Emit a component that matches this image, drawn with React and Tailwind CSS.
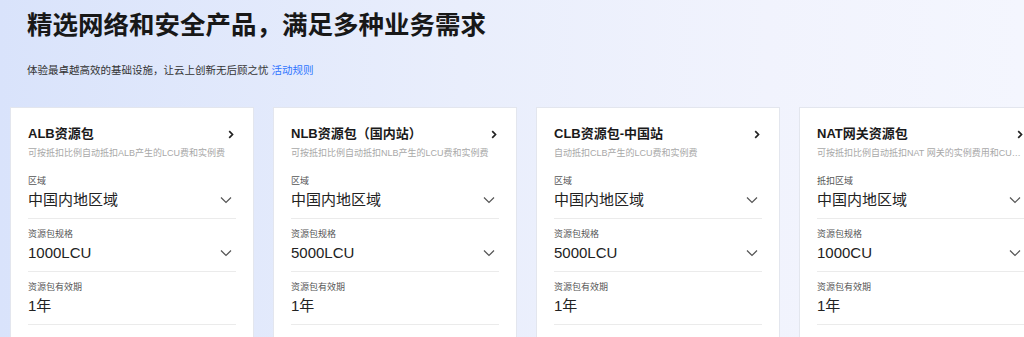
const cards = [
  {
    title: "ALB资源包",
    desc: "可按抵扣比例自动抵扣ALB产生的LCU费和实例费",
    regionLabel: "区域",
    spec: "1000LCU",
  },
  {
    title: "NLB资源包（国内站）",
    desc: "可按抵扣比例自动抵扣NLB产生的LCU费和实例费",
    regionLabel: "区域",
    spec: "5000LCU",
  },
  {
    title: "CLB资源包-中国站",
    desc: "自动抵扣CLB产生的LCU费和实例费",
    regionLabel: "区域",
    spec: "5000LCU",
  },
  {
    title: "NAT网关资源包",
    desc: "可按抵扣比例自动抵扣NAT 网关的实例费用和CU费用",
    regionLabel: "抵扣区域",
    spec: "1000CU",
  },
];

function ChevronDown() {
  return (
    <svg width="12" height="8" viewBox="0 0 12 8" fill="none" className="mr-[4px]">
      <path d="M1 1.5L6 6.5L11 1.5" stroke="#555" strokeWidth="1.2" />
    </svg>
  );
}

function ChevronRight() {
  return (
    <svg width="6" height="9" viewBox="0 0 6 9" fill="none" className="mr-[2px]">
      <path d="M1.2 1.2L4.5 4.5L1.2 7.8" stroke="#222" strokeWidth="1.7" />
    </svg>
  );
}

function Field({ label, value, select }) {
  return (
    <div className="pt-[8px] pb-[7px] border-b border-[#ebebeb]">
      <div className="text-[9px] leading-[14px] text-[#555]">{label}</div>
      <div className="mt-[1px] flex items-center justify-between h-[22px]">
        <span className="text-[15px] leading-[22px] text-[#222]">{value}</span>
        {select && <ChevronDown />}
      </div>
    </div>
  );
}

function Card({ card }) {
  return (
    <div className="w-[244px] shrink-0 bg-white border border-[#e3e6ee] px-[17px] pt-[17px] h-[260px]">
      <div className="flex items-center justify-between h-[18px]">
        <span className="text-[13px] font-bold text-[#1a1a1a]">{card.title}</span>
        <ChevronRight />
      </div>
      <div className="mt-[3px] text-[9px] leading-[14px] text-[#a8a8a8] truncate">
        {card.desc}
      </div>
      <div className="mt-[6px]">
        <Field label={card.regionLabel} value="中国内地区域" select />
        <Field label="资源包规格" value={card.spec} select />
        <Field label="资源包有效期" value="1年" />
      </div>
    </div>
  );
}

export default function App() {
  return (
    <div
      className="w-[1024px] h-[337px] overflow-hidden bg-[linear-gradient(90deg,#d9e3fb_0%,#e9eefc_45%,#f1f3fd_75%,#f4f6fe_100%)]"
      style={{ fontFamily: '"Liberation Sans", "Noto Sans CJK SC", sans-serif' }}
    >
      <div className="pl-[27px] pt-[10px]">
        <h1 className="text-[25.5px] leading-[30px] font-bold text-[#181818]">
          精选网络和安全产品，满足多种业务需求
        </h1>
        <p className="mt-[22px] text-[10.5px] leading-[16px] text-[#333]">
          体验最卓越高效的基础设施，让云上创新无后顾之忧{" "}
          <span className="text-[#2f74ff]">活动规则</span>
        </p>
      </div>
      <div className="mt-[29px] pl-[10px] flex gap-[19px]">
        {cards.map((c) => (
          <Card key={c.title} card={c} />
        ))}
      </div>
    </div>
  );
}
